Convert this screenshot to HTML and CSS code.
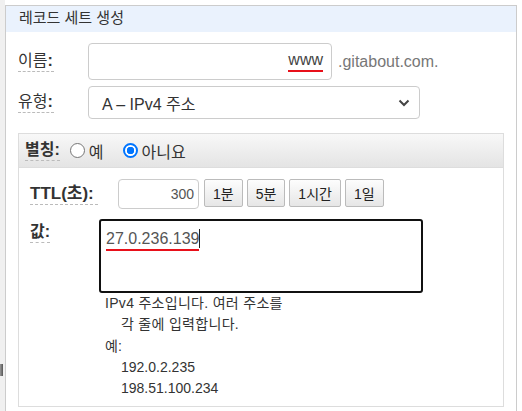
FILE: index.html
```html
<!DOCTYPE html>
<html lang="ko">
<head>
  <meta charset="UTF-8">
  <title>레코드 세트 생성</title>
  <link rel="stylesheet" href="styles.css">
</head>
<body>
  <div class="side"><div class="side-mark"></div></div>

  <div class="panel">
    <div class="panel-head">레코드 세트 생성</div>

    <!-- 이름 / 유형 -->
    <div class="row row-name">
      <span class="label">이름<b>:</b></span>
      <div class="field name-field"><span class="typo">www</span></div>
      <span class="suffix">.gitabout.com.</span>
    </div>
    <div class="row row-type">
      <span class="label">유형<b>:</b></span>
      <div class="field select-field">
        <span>A – IPv4 주소</span>
        <svg class="chevron" width="12" height="8" viewBox="0 0 12 8"><path d="M1.5 1.5 L6 6 L10.5 1.5" fill="none" stroke="#444" stroke-width="2"/></svg>
      </div>
    </div>

    <!-- 별칭 box -->
    <div class="box">
      <div class="box-head">
        <span class="label strong">별칭:</span>
        <span class="radio"></span><span class="opt">예</span>
        <span class="radio checked"></span><span class="opt">아니요</span>
      </div>

      <div class="row row-ttl">
        <span class="label strong ttl-label">TTL(초):</span>
        <div class="field ttl-field">300</div>
        <div class="ttl-buttons">
          <button class="btn">1분</button>
          <button class="btn">5분</button>
          <button class="btn">1시간</button>
          <button class="btn">1일</button>
        </div>
      </div>

      <div class="row row-value">
        <span class="label strong value-label">값:</span>
        <div class="value-col">
          <div class="textarea"><span class="typo">27.0.236.139</span><span class="caret"></span></div>
          <div class="help">
            <div class="ko">IPv4 주소입니다. 여러 주소를</div>
            <div class="indent ko">각 줄에 입력합니다.</div>
            <div>예:</div>
            <div class="indent">192.0.2.235</div>
            <div class="indent">198.51.100.234</div>
          </div>
        </div>
      </div>
    </div>
  </div>
</body>
</html>
```

FILE: styles.css
```css
body {
  margin: 0;
  background: #fff;
  font-family: "Liberation Sans", "Noto Sans CJK KR", sans-serif;
  color: #333;
  display: flex;
  height: 411px;
  overflow: hidden;
}

.side {
  width: 5px;
  background: #f0f0f0;
  flex-shrink: 0;
}

.side-mark {
  margin-top: 364px;
  width: 3px;
  height: 12px;
  background: linear-gradient(to right, #999, #555);
}

.panel {
  margin-top: 5px;
  width: 510px;
  border: 1px solid #ccc;
  border-bottom: none;
}

.panel-head {
  background: #eaf2fd;
  height: 26px;
  line-height: 24px;
  padding-left: 13px;
  font-size: 15px;
  color: #333;
}

.row {
  display: flex;
  align-items: center;
}

.label {
  font-size: 16px;
  line-height: 20px;
  border-bottom: 1px dashed #bbb;
  color: #333;
}

.label b {
  font-weight: bold;
}

.label.strong {
  font-weight: bold;
}

.row-name {
  margin-top: 11px;
  padding-left: 12px;
}

.row-name .label,
.row-type .label {
  width: 36px;
  margin-right: 34px;
}

.field {
  border: 1px solid #ccc;
  border-radius: 4px;
  box-sizing: border-box;
  background: #fff;
}

.name-field {
  width: 244px;
  height: 37px;
  display: flex;
  justify-content: flex-end;
  align-items: center;
  padding-right: 8px;
  font-size: 16px;
  color: #444;
}

.typo {
  border-bottom: 2px solid #e8101a;
  line-height: 18px;
  padding-bottom: 1px;
}

.suffix {
  margin-left: 6px;
  font-size: 16px;
  color: #777;
}

.row-type {
  margin-top: 6px;
  padding-left: 12px;
}

.select-field {
  width: 332px;
  height: 33px;
  display: flex;
  align-items: center;
  justify-content: space-between;
  padding: 0 9px 0 13px;
  font-size: 16px;
  color: #333;
}

.chevron {
  display: block;
}

.box {
  margin: 14px 12px 0;
  border: 1px solid #ddd;
  height: 272px;
}

.box-head {
  height: 33px;
  border-bottom: 1px solid #ddd;
  background: linear-gradient(to bottom, #f8f8f8, #e4e4e4);
  display: flex;
  align-items: center;
  padding-left: 6px;
}

.box-head .label {
  margin-right: 10px;
}

.radio {
  width: 15px;
  height: 15px;
  box-sizing: border-box;
  border: 1px solid #767676;
  border-radius: 50%;
  background: #fff;
}

.radio.checked {
  border: 2px solid #0075ff;
  background: radial-gradient(circle, #0075ff 0 3.5px, #fff 4px);
}

.opt {
  font-size: 16px;
  margin-left: 4px;
  margin-right: 19px;
  color: #333;
}

.row-ttl {
  margin-top: 11px;
  padding-left: 11px;
}

.ttl-label {
  width: 68px;
  margin-right: 20px;
  font-size: 17px;
}

.ttl-field {
  width: 81px;
  height: 30px;
  line-height: 28px;
  text-align: right;
  padding-right: 4px;
  font-size: 14px;
  color: #555;
}

.ttl-buttons {
  display: flex;
  gap: 4px;
  margin-left: 5px;
  align-self: flex-start;
}

.btn {
  height: 28px;
  margin: 0;
  padding: 0 8px;
  border: 1px solid #bbb;
  border-radius: 2px;
  background: linear-gradient(to bottom, #fdfdfd, #e6e6e6);
  font-family: "Liberation Sans", "Noto Sans CJK KR", sans-serif;
  font-size: 14px;
  color: #222;
}

.row-value {
  align-items: flex-start;
  margin-top: 10px;
  padding-left: 11px;
}

.value-label {
  width: 20px;
  margin-right: 49px;
  margin-top: 3px;
  font-size: 16px;
}

.textarea {
  width: 324px;
  height: 74px;
  box-sizing: border-box;
  border: 2px solid #111;
  border-radius: 3px;
  padding: 9px 0 0 5px;
  font-size: 16px;
  color: #555;
  display: flex;
  align-items: flex-start;
}

.caret {
  width: 1px;
  height: 19px;
  background: #222;
  margin-top: -1px;
}

.help {
  padding-left: 6px;
  font-size: 14px;
  line-height: 21.3px;
  color: #333;
}

.help .ko {
  letter-spacing: 0.3px;
}

.indent {
  padding-left: 16px;
}
```
